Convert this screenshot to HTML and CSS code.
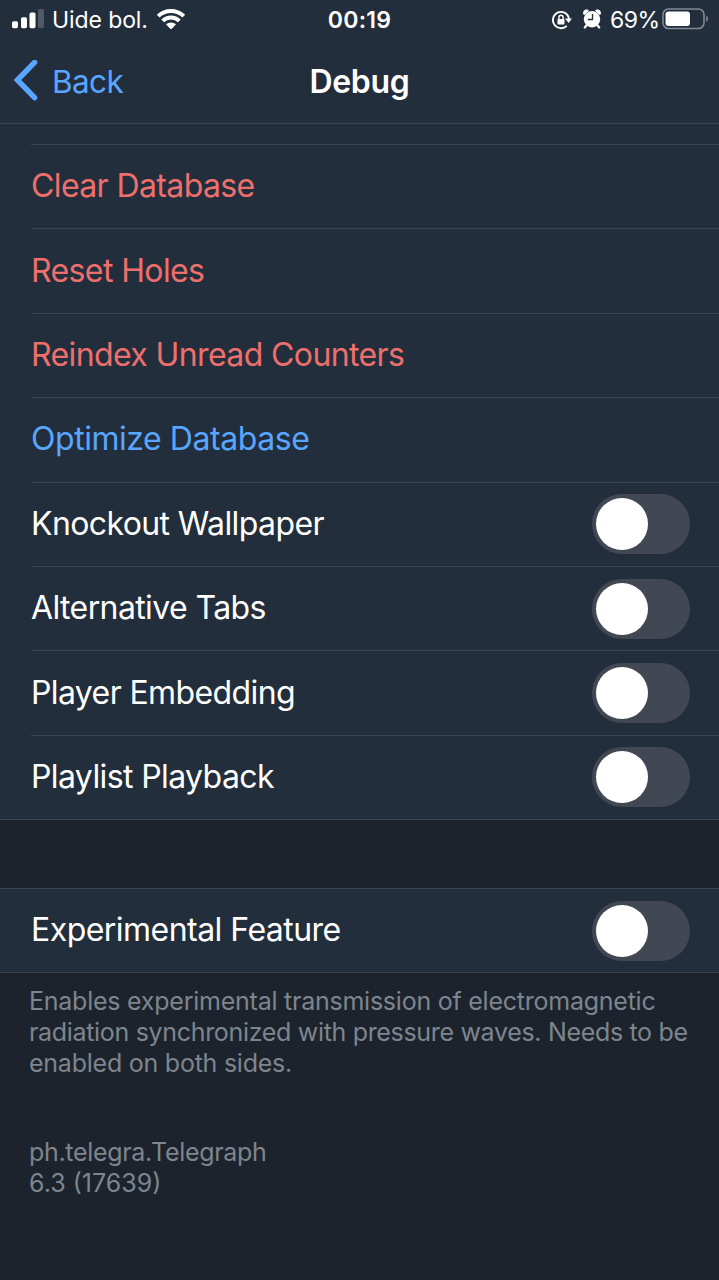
FILE: index.html
```html
<!DOCTYPE html>
<html lang="en">
<head>
<meta charset="utf-8">
<title>Debug</title>
<link rel="stylesheet" href="styles.css">
</head>
<body>
<div class="screen">
  <header class="header">
    <div class="status">
      <div class="status-left">
        <svg class="signal" width="32" height="20" viewBox="0 0 32 20"><g fill="#fff"><rect x="0" y="12.2" width="6" height="7" rx="1.6"/><rect x="9" y="8.2" width="6" height="11" rx="1.6"/><rect x="17.5" y="3.5" width="6" height="15.7" rx="1.6"/></g><rect x="26" y="0" width="6" height="19.2" rx="1.6" fill="#505a67"/></svg>
        <span class="carrier">Uide bol.</span>
        <svg class="wifi" width="30" height="22" viewBox="0 0 30 22"><g fill="none" stroke="#fff" stroke-width="4"><path d="M2.200 8.1A18.4 18.4 0 0 1 27.800 8.1"/><path d="M6.7 12.9A12 12 0 0 1 23.300 12.9"/></g><path d="M10 16.300A7.500 7.500 0 0 1 20 16.300L16 20.500Q15 21.500 14 20.500Z" fill="#fff"/></svg>
      </div>
      <span class="clock">00:19</span>
      <div class="status-right">
        <svg class="lock" width="22" height="20" viewBox="0 0 22 20"><path d="M16.200 4.600A8.200 8.200 0 1 0 15.800 15.900" fill="none" stroke="#fff" stroke-width="1.900"/><path d="M16 4.500A8.200 8.200 0 0 1 18 9" fill="none" stroke="#fff" stroke-width="1.900"/><path d="M14 8.400H21L17.600 13Z" fill="#fff"/><rect x="6.500" y="9" width="7" height="5.600" rx=".8" fill="#fff"/><path d="M7.900 9.500V7.500a2.100 2.300 0 0 1 4.200 0V9.500" fill="none" stroke="#fff" stroke-width="1.400"/></svg>
        <svg class="alarm" width="18" height="20" viewBox="0 0 18 20"><circle cx="9" cy="10.300" r="8.200" fill="#fff"/><path d="M0 5Q-.2 .8 3.800.3L6 1.600L1.500 5.900ZM18 5Q18.200 .8 14.200.3L12 1.600L16.500 5.900Z" fill="#fff"/><path d="M3.800 16L1.800 18.500M14.200 16L16.200 18.500" stroke="#fff" stroke-width="2.200" stroke-linecap="round"/><path d="M9.500 5V10.500H4.800" fill="none" stroke="#232e3c" stroke-width="1.300"/></svg>
        <span class="percent">69%</span>
        <svg class="battery" width="47" height="23" viewBox="0 0 47 23"><rect x="1" y="1" width="41" height="19.500" rx="5.500" fill="none" stroke="#838a93" stroke-width="1.600"/><rect x="3.500" y="3.500" width="24.500" height="14.500" rx="3" fill="#fff"/><path d="M44.200 7.500Q46 8.500 46 10.800Q46 13 44.200 14Z" fill="#838a93"/></svg>
      </div>
    </div>
    <nav class="nav">
      <div class="back">
        <svg width="26" height="42" viewBox="0 0 26 42"><path d="M21.600 2.300L4.400 20L21.600 37.700" fill="none" stroke="#58a6ff" stroke-width="5.400" stroke-linecap="round"/></svg>
        <span class="back-label">Back</span>
      </div>
      <h1 class="title">Debug</h1>
    </nav>
  </header>
  <section class="list">
    <div class="row danger"><span class="label">Clear Database</span></div>
    <div class="row danger"><span class="label">Reset Holes</span></div>
    <div class="row danger"><span class="label">Reindex Unread Counters</span></div>
    <div class="row accent"><span class="label label-wide">Optimize Database</span></div>
    <div class="row"><span class="label">Knockout Wallpaper</span><i class="switch"></i></div>
    <div class="row"><span class="label">Alternative Tabs</span><i class="switch"></i></div>
    <div class="row"><span class="label">Player Embedding</span><i class="switch"></i></div>
    <div class="row"><span class="label">Playlist Playback</span><i class="switch"></i></div>
  </section>
  <section class="single">
    <div class="row"><span class="label label-feature">Experimental Feature</span><i class="switch"></i></div>
  </section>
  <p class="note"><span>Enables experimental transmission of electromagnetic</span><br><span class="tight">radiation synchronized with pressure waves. Needs to be</span><br><span>enabled on both sides.</span></p>
  <p class="note version"><span class="tight">ph.telegra.Telegraph</span><br><span class="build">6.3 (17639)</span></p>
</div>
</body>
</html>
```
FILE: styles.css
```css
* { box-sizing: border-box; }
body { margin: 0; background: #1c232c; font-family: Inter, "Liberation Sans", sans-serif; color: #fff; }
.screen { width: 719px; height: 1280px; overflow: hidden; background: #1c232c; }
svg { display: block; flex: none; }
.header { height: 124px; background: #232e3c; border-bottom: 1px solid #3a4552; }
.status { height: 40px; display: grid; grid-template-columns: 1fr auto 1fr; align-items: center; white-space: nowrap; }
.status-left { display: flex; align-items: center; padding-left: 12px; }
.signal { margin-bottom: 2px; }
.carrier { width: 96px; margin-left: 8px; font-size: 23px; letter-spacing: -.1px; }
.wifi { margin-left: 8px; margin-bottom: 2px; }
.clock { font-size: 23px; font-weight: 600; letter-spacing: .3px; }
.status-right { display: flex; align-items: center; justify-content: flex-end; padding-right: 10px; }
.alarm { margin-left: 10px; margin-bottom: 3px; }
.percent { margin-left: 9px; width: 48px; font-size: 23px; letter-spacing: -.5px; }
.battery { margin-left: 4px; margin-bottom: 1px; }
.nav { height: 82px; display: grid; grid-template-columns: 1fr auto 1fr; align-items: center; }
.back { display: flex; align-items: center; padding-left: 13px; color: #58a6ff; font-size: 31.500px; }
.back-label { margin-left: 13px; letter-spacing: -.6px; }
.title { margin: 0; font-size: 32px; font-weight: 600; letter-spacing: -.3px; }
.list { height: 696px; padding: 20px 0 0 31px; background: #232e3c; border-bottom: 1px solid #3a4552; }
.row { height: 84.400px; display: flex; align-items: center; justify-content: space-between; padding-right: 29px; border-top: 1px solid #3a4552; font-size: 32px; white-space: nowrap; }
.label { padding-bottom: 2px; letter-spacing: -.61px; }
.label-wide { letter-spacing: -.45px; }
.label-feature { letter-spacing: -.53px; }
.danger { color: #ee6f6c; }
.accent { color: #58a6ff; }
.switch { width: 98px; height: 60px; border-radius: 30px; background: #414853; padding: 4px; }
.switch::before { content: ""; display: block; width: 52px; height: 52px; border-radius: 50%; background: #fff; }
.single { height: 85px; margin-top: 68px; padding-left: 31px; background: #232e3c; border-top: 1px solid #3a4552; border-bottom: 1px solid #3a4552; }
.single .row { height: 83px; border-top: 0; }
.note { margin: 13px 0 0 29px; font-size: 25px; line-height: 31px; letter-spacing: -.24px; color: #7e858e; white-space: nowrap; }
.tight { letter-spacing: -.32px; }
.build { letter-spacing: 0; }
.version { margin-top: 58px; }
```
